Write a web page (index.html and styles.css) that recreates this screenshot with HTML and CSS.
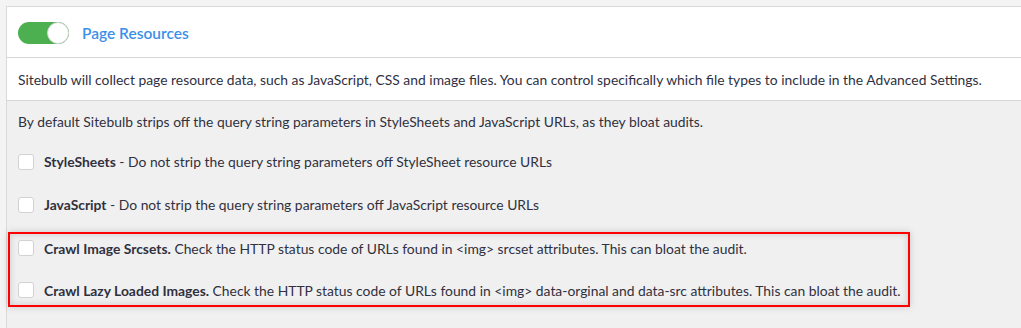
FILE: index.html
```html
<!DOCTYPE html>
<html lang="en">
<head>
    <meta charset="UTF-8">
    <title>Page Resources</title>
    <link rel="stylesheet" href="styles.css">
</head>
<body>
    <div class="page">
        <div class="panel">
            <div class="panel-header">
                <span class="toggle on"><span class="toggle-knob"></span></span>
                <span class="panel-title">Page Resources</span>
            </div>
            <div class="panel-desc">
                Sitebulb will collect page resource data, such as JavaScript, CSS and image files. You can control specifically which file types to include in the Advanced Settings.
            </div>
            <div class="panel-body">
                <p class="intro">By default Sitebulb strips off the query string parameters in StyleSheets and JavaScript URLs, as they bloat audits.</p>
                <div class="option">
                    <span class="checkbox"></span>
                    <span class="option-label"><b>StyleSheets</b> - Do not strip the query string parameters off StyleSheet resource URLs</span>
                </div>
                <div class="option">
                    <span class="checkbox"></span>
                    <span class="option-label"><b>JavaScript</b> - Do not strip the query string parameters off JavaScript resource URLs</span>
                </div>
                <div class="highlight">
                    <div class="option">
                        <span class="checkbox"></span>
                        <span class="option-label"><b>Crawl Image Srcsets.</b> Check the HTTP status code of URLs found in &lt;img&gt; srcset attributes. This can bloat the audit.</span>
                    </div>
                    <div class="option">
                        <span class="checkbox"></span>
                        <span class="option-label"><b>Crawl Lazy Loaded Images.</b> Check the HTTP status code of URLs found in &lt;img&gt; data-orginal and data-src attributes. This can bloat the audit.</span>
                    </div>
                </div>
            </div>
        </div>
    </div>
</body>
</html>
```

FILE: styles.css
```css
* {
    box-sizing: border-box;
    margin: 0;
    padding: 0;
}

html, body {
    height: 100%;
    overflow: hidden;
}

body {
    font-family: 'Lato', 'Liberation Sans', sans-serif;
    font-size: 13.86px;
    color: #30303f;
    background-color: #f4f4f4;
}

.page {
    padding: 6px 0 0 6px;
    height: 100%;
}

.panel {
    height: 100%;
    border: 1px solid #d9d9d9;
    border-right: none;
    border-bottom: none;
    background-color: #f0f0f0;
}

.panel-header {
    display: flex;
    align-items: center;
    height: 51px;
    padding: 1px 0 0 11px;
    background-color: #ffffff;
    border-bottom: 1px solid #d6d6d6;
}

.toggle {
    position: relative;
    display: inline-block;
    width: 51px;
    height: 22px;
    border-radius: 11px;
    background-color: #4caf50;
}

.toggle-knob {
    position: absolute;
    top: 0;
    right: 0;
    width: 22px;
    height: 22px;
    border-radius: 50%;
    background-color: #ffffff;
    border: 1px solid #d4d4d4;
}

.panel-title {
    margin-left: 13px;
    font-size: 15.5px;
    font-weight: 600;
    color: #3c8fe8;
}

.panel-desc {
    display: flex;
    align-items: center;
    height: 43px;
    padding: 0 11px;
    background-color: #ffffff;
    border-bottom: 1px solid #d6d6d6;
    white-space: nowrap;
}

.panel-body {
    padding-top: 11px;
}

.intro {
    padding-left: 11px;
    line-height: 20px;
}

.intro + .option {
    margin-top: 8px;
}

.option {
    display: flex;
    align-items: center;
    height: 43px;
    padding-left: 11px;
    white-space: nowrap;
}

.checkbox {
    flex: none;
    width: 16px;
    height: 16px;
    margin-right: 10px;
    border: 1px solid #d2d2d2;
    border-radius: 3px;
    background-color: #ffffff;
}

.option-label b {
    font-weight: 700;
}

.highlight {
    width: 902px;
    margin: 6px 0 0 1px;
    padding-bottom: 1px;
    border: 2px solid #ff0000;
    display: flex;
    flex-direction: column;
    gap: 14px;
    box-shadow: 0 0 7px rgba(0, 0, 0, 0.16), inset 0 0 7px rgba(0, 0, 0, 0.16);
}

.highlight .option {
    height: 28px;
    padding-left: 8px;
}
```
